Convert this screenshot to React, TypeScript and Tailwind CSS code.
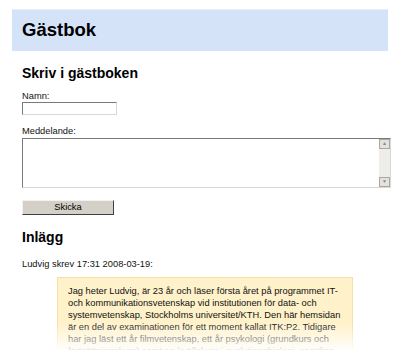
import React from "react";

export default function App() {
  const lines = [
    "Jag heter Ludvig, är 23 år och läser första året på programmet IT-",
    "och kommunikationsvetenskap vid institutionen för data- och",
    "systemvetenskap, Stockholms universitet/KTH. Den här hemsidan",
    "är en del av examinationen för ett moment kallat ITK:P2. Tidigare",
    "har jag läst ett år filmvetenskap, ett år psykologi (grundkurs och",
    "fortsättningskurs) samt en kvällskurs i evolutionsbiologi, samtliga",
    "vid Stockholms universitet.",
  ];
  return (
    <div
      className="relative w-[400px] h-[350px] overflow-hidden bg-white text-black"
      style={{ fontFamily: '"Liberation Sans", Arial, sans-serif' }}
    >
      <div className="pt-[9px] pl-[12px] w-[388px]">
        <div className="h-[42px] bg-[#d5e3f9] border-t border-[#e4edfb] flex items-center pl-[10px]">
          <h1 className="text-[18.5px] font-bold leading-none">Gästbok</h1>
        </div>
      </div>
      <div className="pl-[22px] pr-[10px]">
        <h2 className="mt-[14px] text-[14px] font-bold leading-[16px]">Skriv i gästboken</h2>
        <div className="mt-[10px] text-[9.3px] leading-[11px] text-[#111]">Namn:</div>
        <div className="w-[95px] h-[13px] border border-t-[#7a7a7a] border-l-[#7a7a7a] border-r-[#d8d8d8] border-b-[#d8d8d8] bg-white" />
        <div className="mt-[11px] text-[9.3px] leading-[11px] text-[#111]">Meddelande:</div>
        <div className="mt-[1px] w-[369px] h-[50px] flex border border-t-[#7a7a7a] border-l-[#7a7a7a] border-r-[#d8d8d8] border-b-[#d8d8d8] bg-white">
          <div className="flex-1" />
          <div className="w-[11px] flex flex-col bg-[#eeede9]">
            <div className="h-[10px] bg-[#e4e2dc] border border-[#a9a79f] flex items-center justify-center text-[5px] text-[#888]">▲</div>
            <div className="flex-1" />
            <div className="h-[10px] bg-[#e4e2dc] border border-[#a9a79f] flex items-center justify-center text-[5px] text-[#888]">▼</div>
          </div>
        </div>
        <button className="mt-[12px] w-[92px] h-[15px] bg-[#d4d0c8] border border-t-[#f4f2ee] border-l-[#f4f2ee] border-r-[#404040] border-b-[#404040] text-[9.3px] leading-none text-black flex items-center justify-center">
          Skicka
        </button>
        <h2 className="mt-[14px] text-[14px] font-bold leading-[16px]">Inlägg</h2>
        <div className="mt-[14px] text-[9.3px] leading-[11px] text-[#111]">Ludvig skrev 17:31 2008-03-19:</div>
        <div className="mt-[7px] ml-[35px] w-[296px] bg-[#fff1c9] border border-[#f7dfa4] pt-[7px] pl-[10px] pb-[10px]">
          {lines.map((l, i) => (
            <div key={i} className="text-[9.3px] leading-[12px] text-[#111] whitespace-nowrap">
              {l}
            </div>
          ))}
        </div>
      </div>
      <div className="absolute left-0 right-0 bottom-0 h-[28px] bg-gradient-to-b from-white/0 to-white/90" />
    </div>
  );
}
